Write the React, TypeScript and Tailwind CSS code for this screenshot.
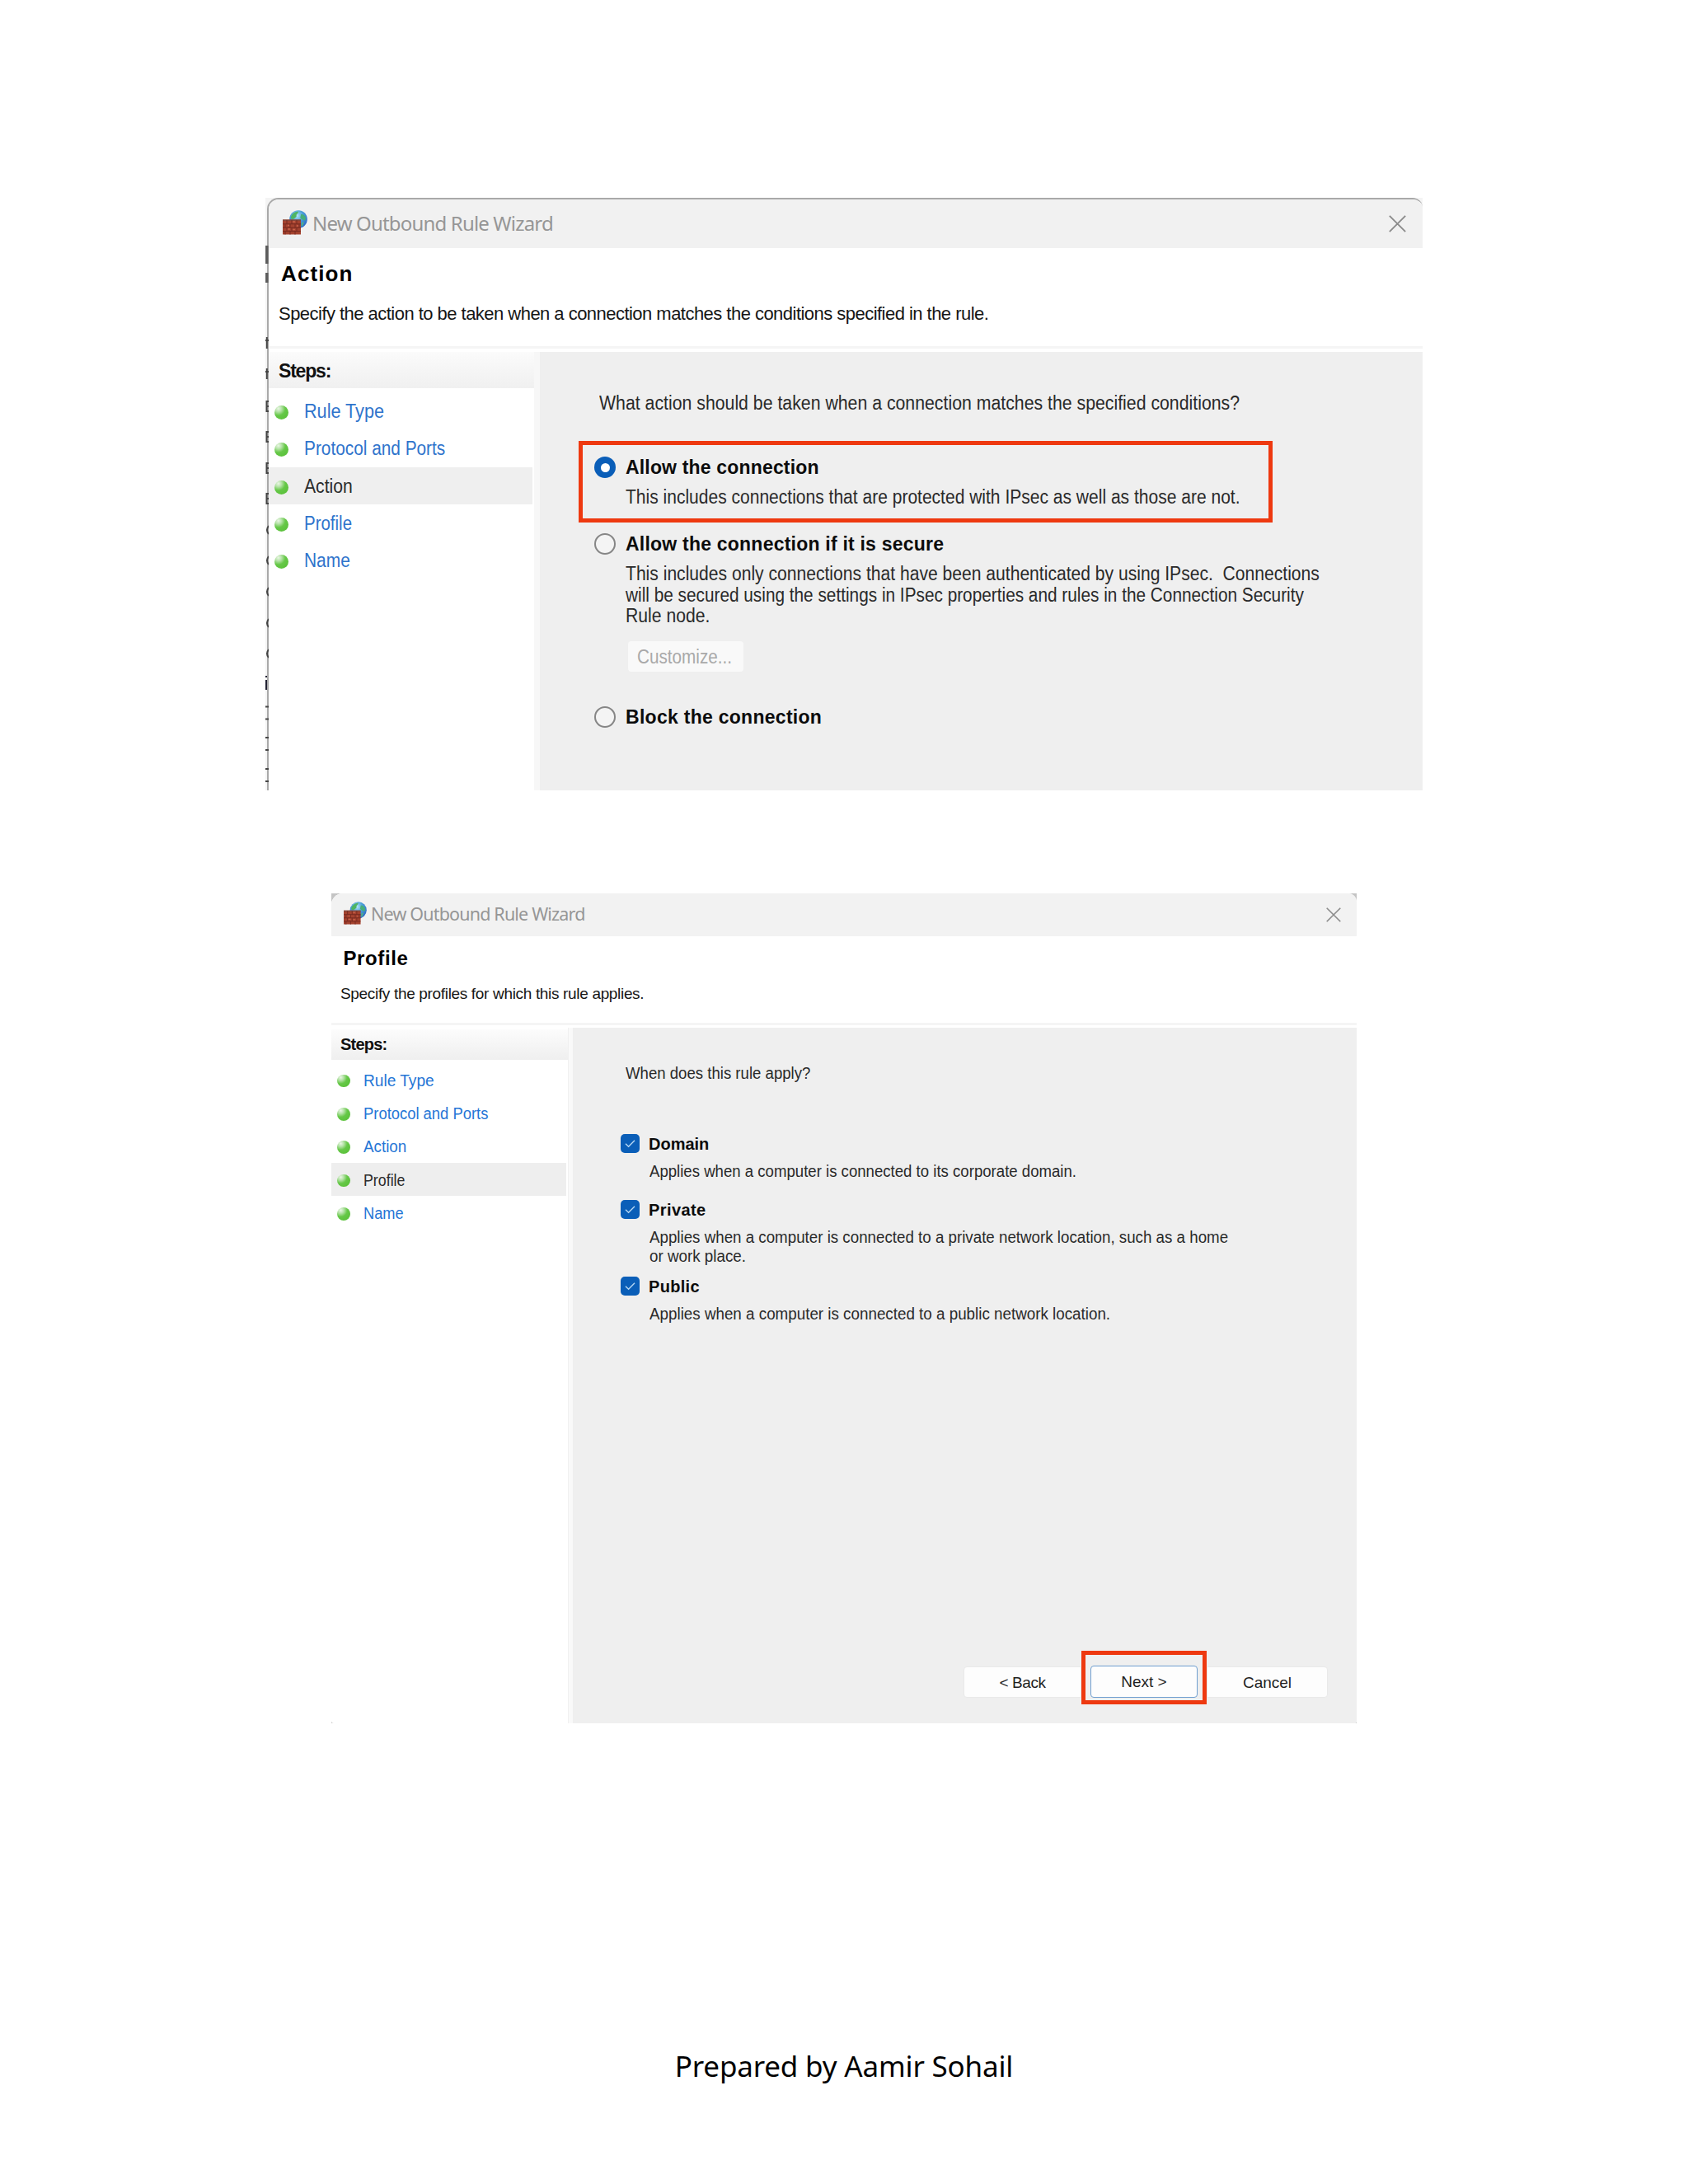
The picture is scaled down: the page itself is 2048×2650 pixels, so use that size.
import type { ReactNode } from "react";

function FirewallIcon({ className, id }: { className: string; id: string }) {
  return (
    <svg className={className} viewBox="0 0 30 30" aria-hidden="true">
      <defs>
        <radialGradient id={id} cx="0.42" cy="0.3" r="0.75">
          <stop offset="0" stopColor="#b4e6f7" />
          <stop offset="0.45" stopColor="#4a9fd8" />
          <stop offset="1" stopColor="#2a62c4" />
        </radialGradient>
      </defs>
      <circle cx="19" cy="11" r="10.8" fill={`url(#${id})`} />
      <path d="M10 8c1.5-3.6 4.500-6 8.500-6.500 1 1.500-.5 2.500-1.500 3.500s.5 2.500-1 3.500-2.500 2.500-4 2.500-2.500-1.500-2-3z" fill="#4fb562" />
      <path d="M22 5c2-.5 4 .5 5.500 3 .8 2 .5 3.500-.5 4.500-1.500.5-2-1-3.500-1.500s-2.500-1.500-2-3 .5-2 .5-3z" fill="#46ae7a" />
      <path d="M23 15l3-.5-1.500 4-2 1.500z" fill="#4fb08a" />
      <rect x="0" y="11.500" width="22" height="18" fill="#a4422f" />
      <path d="M0 12.200h22" stroke="#7e4a3f" strokeWidth="1.400" />
      <path
        d="M0 16.800h22M0 21.200h22M0 25.600h22M5 12v4.800M11 12v4.800M17 12v4.800M3 16.800v4.400M9 16.800v4.400M15 16.800v4.400M20 16.800v4.400M5 21.200v4.400M11 21.200v4.400M17 21.200v4.400M3 25.600v4M9 25.600v4M15 25.600v4"
        stroke="#74291f"
        strokeWidth="0.9"
        fill="none"
      />
      <path d="M6 18.500h2M12 14h3M12 23.500h3M17 19h2M6 23h3" stroke="#c8624a" strokeWidth="1.300" />
    </svg>
  );
}

function CloseIcon({ className }: { className: string }) {
  return (
    <svg className={className} viewBox="0 0 20 20" aria-hidden="true">
      <path d="M0.800 0.800L19.200 19.200M19.200 0.800L0.800 19.200" stroke="#8c8c8c" strokeWidth="1.800" fill="none" />
    </svg>
  );
}

function Dot({ className }: { className: string }) {
  return (
    <span
      className={`${className} shrink-0 rounded-full bg-[radial-gradient(circle_at_28%_22%,#eaf6e5_0%,#b4e2a6_22%,#66c848_46%,#5cc23c_75%,#8ad174_100%)]`}
    />
  );
}

function Radio({ checked = false }: { checked?: boolean }) {
  return checked ? (
    <span className="-ml-px flex size-[26px] shrink-0 items-center justify-center rounded-full bg-[#0a5eb8]">
      <span className="size-[11px] rounded-full bg-white" />
    </span>
  ) : (
    <span className="-ml-px size-[26px] shrink-0 rounded-full border-2 border-[#868686] bg-[#f4f4f4]" />
  );
}

function Checkbox() {
  return (
    <span className="flex size-[23px] shrink-0 items-center justify-center rounded-[5px] bg-[#0a5eb8]">
      <svg className="size-[13px]" viewBox="0 0 13 13" aria-hidden="true">
        <path d="M1 6.800L4.600 10.300L12 2.800" stroke="#b5d6f2" strokeWidth="1.400" fill="none" />
      </svg>
    </span>
  );
}

function Line({ className, children }: { className: string; children: ReactNode }) {
  return <div className={`${className} w-max origin-left whitespace-pre`}>{children}</div>;
}

/* Edges of the list behind the first window that stay visible left of its frame. */
const hooks = [493, 530, 568, 605, 643, 680, 718, 756, 793];
const ticks = [857.5, 872.5, 895, 910, 933, 948];

function BackgroundEdge() {
  return (
    <svg className="absolute left-0 top-0 h-[719px] w-1" viewBox="0 240 4 719" aria-hidden="true">
      <path d="M1.800 298v22M1.800 331v12" stroke="#5c5c5c" strokeWidth="3.500" />
      <path d="M1.800 409v14M0 413h4M1.800 447v13M0 451h4" stroke="#444" strokeWidth="2" />
      {hooks.map((y, i) => (
        <path
          key={y}
          d={i < 4 ? `M4 ${y - 6}H1.500V${y + 6}H4M1 ${y}H4` : `M4 ${y - 5}Q0 ${y} 4 ${y + 5}`}
          stroke="#444"
          strokeWidth="2"
          fill="none"
        />
      ))}
      <path d="M1 820v2M1 825v12" stroke="#223" strokeWidth="2" />
      {ticks.map((y) => (
        <path key={y} d={`M0 ${y}H4`} stroke="#444" strokeWidth="2" />
      ))}
    </svg>
  );
}

const actionSteps = [
  { label: "Rule Type", fit: "scale-x-[0.94]" },
  { label: "Protocol and Ports", fit: "scale-x-[0.905]" },
  { label: "Action", fit: "scale-x-[0.92]" },
  { label: "Profile", fit: "scale-x-[0.89]" },
  { label: "Name", fit: "scale-x-[0.91]" },
];

function ActionDialog() {
  return (
    <section className="relative ml-[322px] h-[719px] w-[1404px] overflow-hidden bg-[#f4f4f4] pl-0.5">
      <div className="flex h-full flex-col overflow-hidden rounded-tl-[14px] rounded-tr-[12px] border-l-2 border-t-2 border-[#a9a9a9] bg-white">
        <header className="flex h-[59px] shrink-0 items-center bg-[#f1f1f1] pl-[17px] pr-[20px]">
          <FirewallIcon id="globe-action" className="-mt-1 size-[30px]" />
          <span className="-mt-0.5 ml-[6px] flex-1 font-['Noto_Sans'] text-[24px] leading-[30px] tracking-[-0.83px] text-[#969696]">
            New Outbound Rule Wizard
          </span>
          <CloseIcon className="size-[21px]" />
        </header>
        <div className="h-[119px] shrink-0 pt-[16px]">
          <Line className="ml-[15px] text-[26px] font-bold leading-[30px] tracking-[1.1px] text-black">Action</Line>
          <Line className="ml-[12px] mt-[21px] text-[22px] leading-[26px] tracking-[-0.53px] text-[#161616]">
            Specify the action to be taken when a connection matches the conditions specified in the rule.
          </Line>
        </div>
        <div className="mb-1 h-[3px] shrink-0 bg-[#f5f5f5]" />
        <div className="flex flex-1">
          <nav className="w-[322px]">
            <div className="h-[44px] bg-linear-to-b from-[#fbfbfb] to-[#f0f0f0] pt-[10px]">
              <Line className="ml-[12px] text-[23px] font-bold leading-[26px] tracking-[-1.2px] text-[#111]">Steps:</Line>
            </div>
            <ul className="mr-0.5 mt-[5px]">
              {actionSteps.map((s) => (
                <li
                  key={s.label}
                  className={`flex h-[45.3px] items-center pl-[7px] ${s.label === "Action" ? "bg-[#efefef] text-[#2b2b2b]" : "text-[#2f74cc]"}`}
                >
                  <Dot className="mt-1 size-[17px]" />
                  <Line className={`ml-[18.500px] mt-px text-[23px] leading-[26px] ${s.fit}`}>{s.label}</Line>
                </li>
              ))}
            </ul>
          </nav>
          <div className="w-[7px] bg-[#f7f7f7]" />
          <main className="flex-1 bg-[#efefef] pl-[47px] pt-[49px] text-[#2a2a2a]">
            <Line className="ml-[25px] scale-x-[0.925] text-[23px] leading-[26px]">
              What action should be taken when a connection matches the specified conditions?
            </Line>
            <div className="mt-[33px] h-[98.500px] w-[842px] border-[5.500px] border-[#ee3910] pl-[15px] pt-[14px]">
              <div className="flex gap-[12px]">
                <Radio checked />
                <Line className="text-[23px] font-bold leading-[26px] tracking-[0.17px] text-[#0c0c0c]">Allow the connection</Line>
              </div>
              <Line className="ml-[37px] mt-[10px] scale-x-[0.914] text-[23px] leading-[26px]">
                This includes connections that are protected with IPsec as well as those are not.
              </Line>
            </div>
            <div className="pl-[20px] pt-[13.500px]">
              <div className="flex gap-[12px]">
                <Radio />
                <Line className="text-[23px] font-bold leading-[26px] tracking-[0.22px] text-[#0c0c0c]">
                  Allow the connection if it is secure
                </Line>
              </div>
              <div className="ml-[37px] mt-[11px] text-[23px] leading-[25.700px]">
                <Line className="scale-x-[0.917]">
                  {"This includes only connections that have been authenticated by using IPsec.  Connections"}
                </Line>
                <Line className="scale-x-[0.904]">
                  will be secured using the settings in IPsec properties and rules in the Connection Security
                </Line>
                <Line className="scale-x-[0.92]">Rule node.</Line>
              </div>
              <button className="ml-[40px] mt-[17px] block h-[37px] w-[140px] rounded-[4px] bg-[#f9f9f9] pl-[11px] pt-px text-[#a9a9a9]">
                <Line className="scale-x-[0.9] text-[23px] leading-[36px]">Customize...</Line>
              </button>
              <div className="mt-[42px] flex gap-[12px]">
                <Radio />
                <Line className="text-[23px] font-bold leading-[26px] tracking-[0.28px] text-[#0c0c0c]">Block the connection</Line>
              </div>
            </div>
          </main>
        </div>
      </div>
      <BackgroundEdge />
    </section>
  );
}

const profileSteps = [
  { label: "Rule Type", fit: "scale-x-[0.955]" },
  { label: "Protocol and Ports", fit: "scale-x-[0.92]" },
  { label: "Action", fit: "scale-x-[0.94]" },
  { label: "Profile", fit: "scale-x-[0.89]" },
  { label: "Name", fit: "scale-x-[0.91]" },
];

const profiles = [
  {
    name: "Domain",
    space: "mt-[62px]",
    track: "tracking-[0px]",
    lines: [{ text: "Applies when a computer is connected to its corporate domain.", fit: "scale-x-[0.93]" }],
  },
  {
    name: "Private",
    space: "mt-[23px]",
    track: "tracking-[0.4px]",
    lines: [
      { text: "Applies when a computer is connected to a private network location, such as a home", fit: "scale-x-[0.937]" },
      { text: "or work place.", fit: "scale-x-[0.94]" },
    ],
  },
  {
    name: "Public",
    space: "mt-[13px]",
    track: "tracking-[0.3px]",
    lines: [{ text: "Applies when a computer is connected to a public network location.", fit: "scale-x-[0.94]" }],
  },
];

function ProfileDialog() {
  return (
    <section className="ml-[402px] mt-[125px] h-[1007px] w-[1244px] bg-[#c4c4c4]">
      <div className="flex h-full flex-col overflow-hidden rounded-b-[3px] rounded-tl-[14px] rounded-tr-[10px] bg-white">
        <header className="flex h-[52px] shrink-0 items-center bg-[#f2f2f2] pl-[15px] pr-[19px]">
          <FirewallIcon id="globe-profile" className="-mt-1 size-[28px]" />
          <span className="-mt-0.5 ml-[5px] flex-1 font-['Noto_Sans'] text-[21.500px] leading-[28px] tracking-[-0.82px] text-[#969696]">
            New Outbound Rule Wizard
          </span>
          <CloseIcon className="size-[18px]" />
        </header>
        <div className="h-[105px] shrink-0 pt-[13px]">
          <Line className="ml-[14.500px] text-[24px] font-bold leading-[28px] tracking-[0.6px] text-black">Profile</Line>
          <Line className="ml-[11px] mt-[17px] text-[19px] leading-[24px] tracking-[-0.33px] text-[#161616]">
            Specify the profiles for which this rule applies.
          </Line>
        </div>
        <div className="mb-[3px] h-[3px] shrink-0 bg-[#f5f5f5]" />
        <div className="flex flex-1">
          <nav className="w-[287px] pt-0.5">
            <div className="h-[37px] bg-linear-to-b from-[#fcfcfc] to-[#efefef] pt-[6px]">
              <Line className="ml-[11px] text-[20px] font-bold leading-[24px] tracking-[-0.8px] text-[#111]">Steps:</Line>
            </div>
            <ul className="mr-0.5 mt-1">
              {profileSteps.map((s) => (
                <li
                  key={s.label}
                  className={`flex h-[40.300px] items-center pl-[7px] ${s.label === "Profile" ? "bg-[#eeeeee] text-[#2b2b2b]" : "text-[#2576d6]"}`}
                >
                  <Dot className="mt-[3px] size-[15.500px]" />
                  <Line className={`ml-[16px] mt-px text-[20px] leading-[24px] ${s.fit}`}>{s.label}</Line>
                </li>
              ))}
            </ul>
          </nav>
          <div className="w-[6px] border-l border-[#f0f0f0] bg-[#f9f9f9]" />
          <main className="flex flex-1 flex-col bg-[#efefef] pt-[43px] text-[#2a2a2a]">
            <Line className="ml-[64px] scale-x-[0.93] text-[20px] leading-[24px]">When does this rule apply?</Line>
            {profiles.map((p) => (
              <div key={p.name} className={`pl-[58px] ${p.space}`}>
                <div className="flex gap-[11px]">
                  <Checkbox />
                  <Line className={`text-[20px] font-bold leading-[24px] text-[#0c0c0c] ${p.track}`}>{p.name}</Line>
                </div>
                <div className="ml-[34.500px] mt-[10px] text-[20px] leading-[23px]">
                  {p.lines.map((l) => (
                    <Line key={l.text} className={l.fit}>
                      {l.text}
                    </Line>
                  ))}
                </div>
              </div>
            ))}
            <footer className="mb-[23px] mr-[35px] mt-auto flex items-start justify-end text-[19px] leading-[37px] text-[#1f1f1f]">
              <button className="mt-[19px] h-[38px] w-[143px] rounded-l-[4px] border border-[#e9e9e9] bg-[#fdfdfd] tracking-[-0.4px]">
                {"< Back"}
              </button>
              <div className="h-[65px] w-[152px] border-[5px] border-[#ee3910] pl-[6px] pt-[13px]">
                <button className="h-[39px] w-[130px] rounded-[4px] border-[1.500px] border-[#6f9fd0] bg-[#fdfdfd]">{"Next >"}</button>
              </div>
              <button className="mt-[19px] h-[38px] w-[147px] rounded-r-[4px] border border-[#e9e9e9] bg-[#fdfdfd]">Cancel</button>
            </footer>
          </main>
        </div>
      </div>
    </section>
  );
}

export default function App() {
  return (
    <div className="h-[2650px] w-[2048px] overflow-hidden bg-white pt-[240px] font-['Liberation_Sans',Arial,sans-serif]">
      <ActionDialog />
      <ProfileDialog />
      <p className="mt-[392px] text-center font-['Noto_Sans',sans-serif] text-[35px] leading-[48px] tracking-[-0.18px] text-black">
        Prepared by Aamir Sohail
      </p>
    </div>
  );
}
